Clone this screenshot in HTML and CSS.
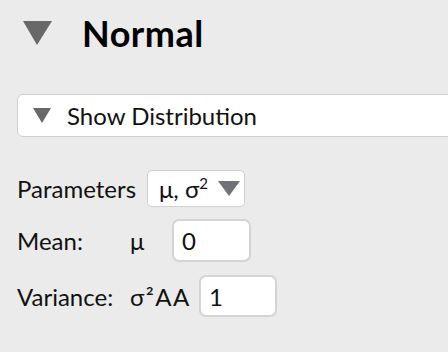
FILE: index.html
```html
<!DOCTYPE html>
<html lang="en">
<head>
    <meta charset="UTF-8" />
    <title>Normal</title>
    <link rel="stylesheet" href="styles.css">
</head>
<body>
    <div class="panel">
        <div class="title">
            <span class="tri tri-big"></span>
            <h1>Normal</h1>
        </div>

        <div class="disclosure">
            <span class="tri tri-small"></span>
            <span>Show Distribution</span>
        </div>

        <div class="row row-params">
            <span class="label">Parameters</span>
            <div class="select">
                <span>μ, σ<sup>2</sup></span>
                <span class="tri tri-select"></span>
            </div>
        </div>

        <div class="row row-mean">
            <span class="label fixed">Mean:</span>
            <span class="sym">μ</span>
            <input type="text" class="field" value="0" />
        </div>

        <div class="row row-var">
            <span class="label fixed">Variance:</span>
            <span class="sym">σ²AA</span>
            <input type="text" class="field" value="1" />
        </div>
    </div>
</body>
</html>
```

FILE: styles.css
```css
html, body {
    margin: 0;
    overflow: hidden;
}
body {
    font-family: 'Lato', sans-serif;
    background-color: #ebebeb;
    color: #111;
    width: 448px;
    height: 352px;
}
.panel {
    padding: 12px 0 0 17px;
}
.title {
    display: flex;
    align-items: center;
    height: 42px;
}
.title h1 {
    margin: 0 0 0 30px;
    font-size: 36px;
    font-weight: 700;
    letter-spacing: 0.5px;
    color: #000;
}
.tri {
    display: inline-block;
    width: 0;
    height: 0;
    border-style: solid;
    border-color: #686868 transparent transparent transparent;
}
.tri-big {
    margin-left: 6px;
    border-width: 24px 15px 0 14px;
}
.tri-small {
    border-width: 15px 9px 0 9px;
    margin: 0 16px 0 15px;
}
.tri-select {
    border-width: 15px 11px 0 11px;
    border-top-color: #6f7276;
    margin-left: 10px;
}
.disclosure {
    display: flex;
    align-items: center;
    box-sizing: border-box;
    margin-top: 40px;
    width: 460px;
    height: 43px;
    background: white;
    border: 1px solid #d0d0d0;
    border-radius: 6px;
    font-size: 24px;
}
.row {
    display: flex;
    align-items: center;
    font-size: 24px;
}
.row-params {
    margin-top: 33px;
}
.row-mean {
    margin-top: 12px;
}
.row-var {
    margin-top: 13px;
}
.label {
    margin-right: 11px;
}
.label.fixed {
    width: 102px;
}
.select {
    display: flex;
    align-items: center;
    box-sizing: border-box;
    height: 37px;
    padding: 0 4px 0 11px;
    background: white;
    border: 1px solid #d0d0d0;
    border-radius: 5px;
}
.select sup {
    font-size: 15px;
    vertical-align: 9px;
    line-height: 0;
}
.sym {
    min-width: 34px;
    margin-right: 8px;
}
.row-var .sym {
    letter-spacing: 1.5px;
}
.field {
    width: 79px;
    height: 43px;
    box-sizing: border-box;
    padding: 0 8px;
    font-family: inherit;
    font-size: 24px;
    color: #111;
    background: white;
    border: 2px solid #d4d4d4;
    border-radius: 7px;
    outline: none;
}
.row-var .field {
    width: 78px;
    height: 42px;
}
```
